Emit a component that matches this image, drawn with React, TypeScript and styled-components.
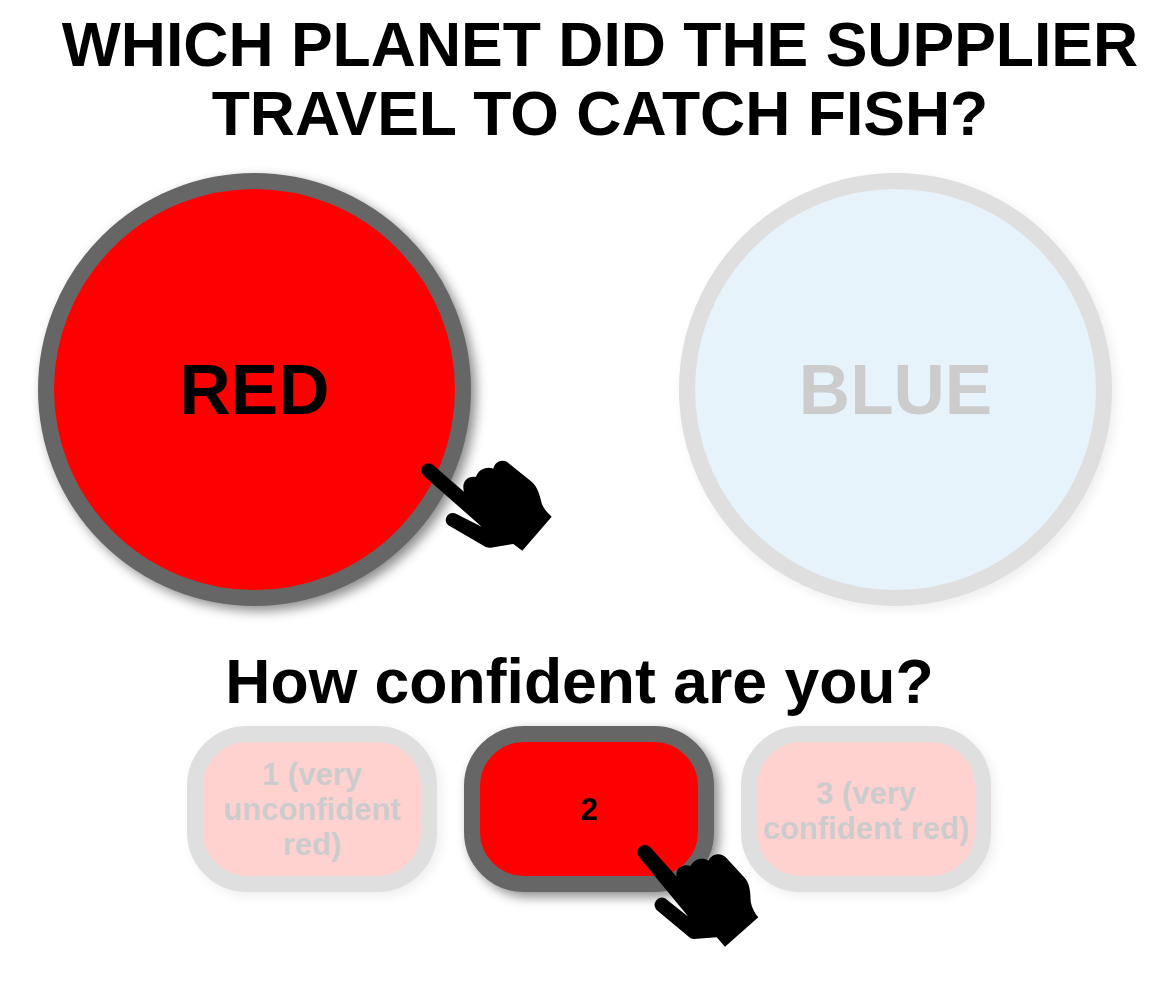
import React from "react";
import styled, { createGlobalStyle } from "styled-components";

const GlobalStyle = createGlobalStyle`
  html, body {
    margin: 0;
    padding: 0;
    background: #fff;
    font-family: "Liberation Sans", Arial, sans-serif;
  }
`;

// traced from the screenshot, one for each cursor because they are not the same size
const bigHand =
  "M99 75 L192 155 C184 128 200 106 228 111 C234 90 258 78 280 86 C284 66 308 54 326 70 L395 125 C412 140 418 160 425 190 C430 205 442 218 455 230 L367 332 L340 312 L272 323 C264 324 258 321 252 318 L145 256 A21 21 0 0 1 165 220 L245 260 L71 107 A21 21 0 0 1 99 75 Z";
const smallHand =
  "M91 52 L170 140 C164 118 186 100 212 108 C220 88 248 80 265 92 C278 68 305 68 320 85 L375 145 C388 160 392 185 392 215 C396 235 405 250 415 262 L315 350 L290 322 L222 327 C216 327 212 325 208 322 L109 239 A22 22 0 0 1 135 205 L205 260 L58 82 A22 22 0 0 1 91 52 Z";

function App() {
  return (
    <Page>
      <GlobalStyle />
      <Title>
        WHICH PLANET DID THE SUPPLIER
        <br />
        TRAVEL TO CATCH FISH?
      </Title>

      <PlanetRow>
        <Planet $color="#ff0000" $selected>
          RED
          <HandIcon $left={346} $top={251} width={170} height={130} viewBox="0 0 510 390">
            <path d={bigHand} />
          </HandIcon>
        </Planet>
        <Planet $color="#e6f3fa">BLUE</Planet>
      </PlanetRow>

      <Question>How confident are you?</Question>

      <ConfidenceRow>
        <Choice>
          1 (very
          <br />
          unconfident
          <br />
          red)
        </Choice>
        <Choice $selected>
          2
          <HandIcon $left={140} $top={88} width={160} height={130} viewBox="0 0 480 390">
            <path d={smallHand} />
          </HandIcon>
        </Choice>
        <Choice $lower>
          3 (very
          <br />
          confident red)
        </Choice>
      </ConfidenceRow>
    </Page>
  );
}

export default App;

const Page = styled.div`
  width: 1175px;
  height: 993px;
  overflow: hidden;
  padding-top: 10px;
  box-sizing: border-box;
`;

const Title = styled.h1`
  margin: 0 0 0 25px;
  font-size: 62.5px;
  line-height: 69px;
  font-weight: 700;
  text-align: center;
  color: #000;
`;

const PlanetRow = styled.div`
  display: flex;
  gap: 208px;
  margin-top: 25px;
  padding-left: 38px;
`;

const Planet = styled.div<{ $color: string; $selected?: boolean }>`
  position: relative;
  width: 433px;
  height: 433px;
  box-sizing: border-box;
  border-radius: 50%;
  border: 16px solid ${(p) => (p.$selected ? "#666666" : "#dfdfdf")};
  background: ${(p) => p.$color};
  box-shadow: ${(p) => (p.$selected ? "5px 5px 12px rgba(0,0,0,.45)" : "4px 4px 12px rgba(0,0,0,.07)")};
  display: flex;
  align-items: center;
  justify-content: center;
  font-size: 71px;
  font-weight: 700;
  color: ${(p) => (p.$selected ? "#000" : "#cccccc")};
`;

const Question = styled.h2`
  margin: 39px 0 0 -16px;
  font-size: 62.5px;
  line-height: 72px;
  font-weight: 700;
  text-align: center;
  color: #000;
`;

const ConfidenceRow = styled.div`
  display: flex;
  gap: 27px;
  margin-top: 9px;
  padding-left: 187px;
`;

const Choice = styled.div<{ $selected?: boolean; $lower?: boolean }>`
  position: relative;
  width: 250px;
  height: 166px;
  box-sizing: border-box;
  padding-top: ${(p) => (p.$lower ? 4 : 0)}px;
  border-radius: 60px;
  border: 16px solid ${(p) => (p.$selected ? "#666666" : "#dfdfdf")};
  background: ${(p) => (p.$selected ? "#ff0000" : "#ffd2d0")};
  box-shadow: ${(p) => (p.$selected ? "5px 5px 12px rgba(0,0,0,.45)" : "4px 4px 12px rgba(0,0,0,.07)")};
  display: flex;
  align-items: center;
  justify-content: center;
  text-align: center;
  font-size: 31px;
  line-height: 35px;
  font-weight: 700;
  color: ${(p) => (p.$selected ? "#000" : "#cccccc")};
`;

const HandIcon = styled.svg<{ $left: number; $top: number }>`
  position: absolute;
  left: ${(p) => p.$left}px;
  top: ${(p) => p.$top}px;
  fill: #000;
`;
